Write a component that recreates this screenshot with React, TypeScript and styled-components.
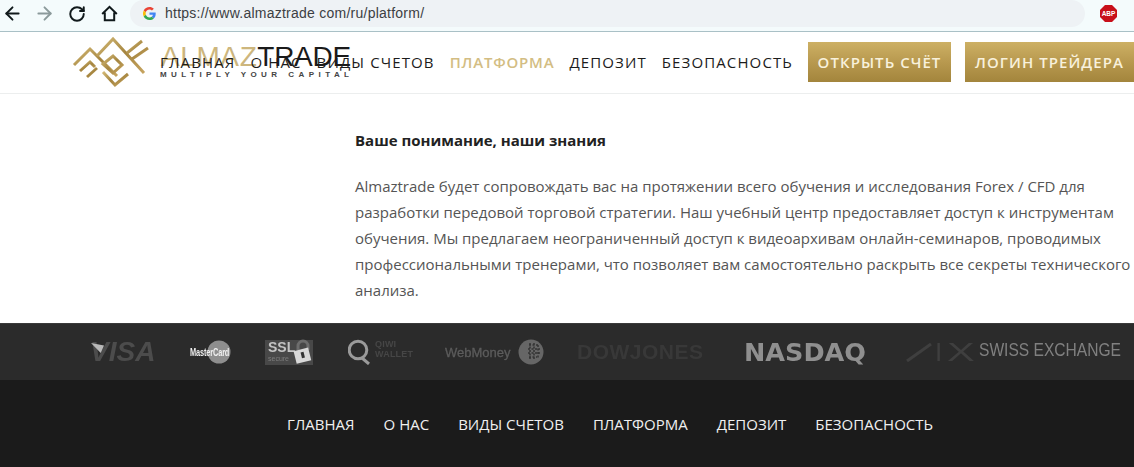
import React from 'react'
import styled, { createGlobalStyle } from 'styled-components'
import { ArrowLeft, ArrowRight, RotateCw } from 'lucide-react'

const Global = createGlobalStyle`
  html, body {
    margin: 0;
    padding: 0;
    background: #fff;
    overflow: hidden;
  }
  body {
    font-family: "Open Sans", "Liberation Sans", sans-serif;
  }
`

const Page = styled.div`
  width: 1134px;
  height: 467px;
  overflow: hidden;
  display: flex;
  flex-direction: column;
`

const Toolbar = styled.div`
  height: 27px;
  flex: none;
  display: flex;
  align-items: center;
  background: #f4fbfc;
  border-bottom: 1px solid #a9c0c6;
  padding: 0 0 4px 2px;
`

const NavIcon = styled.span<{ $gap: number; $muted?: boolean }>`
  display: flex;
  margin-right: ${(p) => p.$gap}px;
  color: ${(p) => (p.$muted ? '#8b9a9b' : '#10191b')};
`

const AddressBar = styled.div`
  width: 955px;
  height: 27px;
  border-radius: 14px;
  background: #eef2f5;
  display: flex;
  align-items: center;
  padding-left: 13px;
  gap: 9px;
  box-sizing: border-box;
`

const Url = styled.span`
  font-family: "Liberation Sans", Arial, sans-serif;
  font-size: 14px;
  color: #3c4043;
  letter-spacing: 0.245px;
  margin-top: -1px;
`

const AbpBadge = styled.svg`
  margin-left: 15px;
  flex: none;
`

const SiteHeader = styled.header`
  position: relative;
  height: 59px;
  flex: none;
  display: flex;
  align-items: center;
  padding: 0 0 2px 160px;
  background: #fff;
  border-bottom: 1px solid #eceeee;
`

const Logo = styled.div`
  position: absolute;
  left: 70px;
  top: 2px;
  display: flex;
  align-items: flex-start;
`

const LogoWords = styled.div`
  margin-top: 9px;
  display: flex;
  flex-direction: column;
`

const Wordmark = styled.div`
  font-family: "Liberation Sans", Arial, sans-serif;
  font-size: 28px;
  line-height: 27px;
  margin-left: 1px;
  letter-spacing: -0.3px;
  color: #1a1a1a;
  white-space: nowrap;

  span {
    color: #cdb67d;
    letter-spacing: 0.6px;
  }
`

const Tagline = styled.div`
  font-family: "Liberation Sans", Arial, sans-serif;
  font-size: 8px;
  font-weight: 700;
  line-height: 9px;
  letter-spacing: 4.45px;
  color: #444;
  white-space: nowrap;
`

const Menu = styled.nav`
  position: relative;
  display: flex;
  align-items: center;
  gap: 15px;
`

const MenuLink = styled.a<{ $active?: boolean }>`
  font-size: 15px;
  letter-spacing: ${(p) => (p.$active ? 0.8 : 1.12)}px;
  white-space: nowrap;
  color: ${(p) => (p.$active ? '#d3bd83' : '#1c1c1c')};
  font-weight: ${(p) => (p.$active ? 600 : 400)};
`

const GoldButton = styled.a<{ $width: number; $gap: number }>`
  flex: none;
  width: ${(p) => p.$width}px;
  margin-left: ${(p) => p.$gap}px;
  height: 40px;
  display: flex;
  align-items: center;
  justify-content: center;
  font-size: 15px;
  font-weight: 600;
  letter-spacing: 1.05px;
  white-space: nowrap;
  color: #f8f1dc;
  background: linear-gradient(180deg, #cdb064 0%, #b8994f 50%, #a3853c 100%);
`

const Content = styled.main`
  flex: 1;
  padding: 35px 0 0 355px;
  background: #fff;
`

const Heading = styled.h3`
  margin: 0 0 22px;
  font-size: 15px;
  line-height: 22px;
  font-weight: 700;
  color: #222;
`

const Paragraph = styled.p`
  margin: 0;
  width: 779px;
  font-size: 15px;
  line-height: 26px;
  color: #555;
`

const LogoBand = styled.div`
  height: 57px;
  flex: none;
  display: flex;
  align-items: center;
  padding-left: 90px;
  box-sizing: border-box;
  background: #2b2b2b;
  border-top: 1px solid #3a3a3a;
`

const Brand = styled.div<{ $width: number }>`
  width: ${(p) => p.$width}px;
  flex: none;
  display: flex;
  align-items: center;
  white-space: nowrap;
  filter: blur(0.5px);
`

const Visa = styled.span`
  position: relative;
  font-family: "Liberation Sans", Arial, sans-serif;
  font-size: 28px;
  font-weight: 700;
  font-style: italic;
  color: #4c4c4c;

  &::before {
    content: '';
    position: absolute;
    left: 1px;
    top: 7px;
    width: 13px;
    height: 10px;
    background: #b8b8b8;
    clip-path: polygon(0 0, 100% 25%, 75% 100%);
  }
`

const MasterLabel = styled.span`
  position: relative;
  display: inline-block;
  font-family: "Liberation Sans", Arial, sans-serif;
  font-size: 10px;
  font-weight: 700;
  letter-spacing: -0.2px;
  color: #f0f0f0;
  margin-right: -36px;
  transform: scaleX(0.74);
  transform-origin: left center;
`

const SslBox = styled.span`
  flex: none;
  display: flex;
  flex-direction: column;
  width: 48px;
  height: 25px;
  padding-left: 3px;
  box-sizing: border-box;
  background: #484848;
  font-family: "Liberation Sans", Arial, sans-serif;
`

const SslText = styled.span`
  font-size: 14px;
  font-weight: 700;
  line-height: 15px;
  color: #c4c4c4;
`

const SslSub = styled.span`
  font-size: 7px;
  line-height: 8px;
  color: #7c7c7c;
`

const QiwiText = styled.span`
  font-family: "Liberation Sans", Arial, sans-serif;
  font-size: 9px;
  font-weight: 700;
  line-height: 10px;
  margin: -6px 0 0 2px;
  color: #464646;
  letter-spacing: 0.2px;
`

const WebMoney = styled.span`
  font-family: "Liberation Sans", Arial, sans-serif;
  font-size: 13px;
  color: #5c5c5c;
  -webkit-text-stroke: 0.3px #5c5c5c;
  margin-right: 7px;
`

const DowJones = styled.span`
  font-family: "Liberation Sans", Arial, sans-serif;
  font-size: 21px;
  font-weight: 700;
  letter-spacing: 0.5px;
  color: #383838;
`

const Nasdaq = styled.span`
  font-family: "DejaVu Sans", sans-serif;
  font-size: 25.500px;
  font-weight: 700;
  color: #8f8f8f;
`

const SixMark = styled.span`
  font-family: "Liberation Sans", Arial, sans-serif;
  font-size: 26px;
  letter-spacing: 5px;
  color: #3f3f3f;
  width: 44px;
  flex: none;
`

const SixX = styled.span`
  display: inline-block;
  transform: scaleX(1.6);
  transform-origin: left center;
`

const SwissLabel = styled.span`
  display: inline-block;
  font-family: "Liberation Sans", Arial, sans-serif;
  font-size: 19px;
  color: #808080;
  margin: -5px -31px 0 0;
  transform: scaleX(0.82);
  transform-origin: left center;
`

const Footer = styled.footer`
  height: 87px;
  flex: none;
  box-sizing: border-box;
  background: #1b1b1b;
  display: flex;
  padding: 34px 0 0 287px;
  gap: 29px;
`

const FooterLink = styled.a`
  font-size: 15px;
  line-height: 20px;
  color: #f0f0f0;
  white-space: nowrap;
`

const GoogleG = () => (
  <svg width="13" height="13" viewBox="0 0 48 48">
    <path fill="#EA4335" d="M24 9.500c3.500 0 6.700 1.300 9.100 3.500l6.800-6.800C35.800 2.400 30.200 0 24 0 14.600 0 6.500 5.400 2.600 13.200l7.900 6.200C12.400 13.600 17.700 9.500 24 9.500z" />
    <path fill="#4285F4" d="M46.900 24.500c0-1.600-.1-3.100-.4-4.500H24v9h12.900c-.6 3-2.200 5.500-4.700 7.200l7.700 6c4.500-4.200 7-10.300 7-17.700z" />
    <path fill="#FBBC05" d="M10.500 28.600c-.5-1.400-.8-3-.8-4.600s.3-3.200.8-4.600l-7.900-6.200C.9 16.500 0 20.100 0 24s.9 7.500 2.600 10.800l7.900-6.200z" />
    <path fill="#34A853" d="M24 48c6.500 0 11.900-2.100 15.900-5.800l-7.700-6c-2.200 1.400-4.900 2.300-8.200 2.300-6.300 0-11.600-4.100-13.500-9.900l-7.900 6.200C6.500 42.600 14.600 48 24 48z" />
  </svg>
)

const HomeIcon = () => (
  <svg width="17" height="17" viewBox="0 0 17 17" fill="none" stroke="#10191b" strokeWidth="2">
    <path d="M1.200 9 8.500 1.800 15.800 9M3.800 7.500v7.700h9.400V7.500" />
  </svg>
)

const LogoMark = () => (
  <svg width="90" height="56" viewBox="0 0 90 56" fill="none" strokeWidth="3" stroke="url(#gold)">
    <defs>
      <linearGradient id="gold" x1="0" y1="0" x2="1" y2="1">
        <stop offset="0" stopColor="#d3b976" />
        <stop offset="0.5" stopColor="#a5853f" />
        <stop offset="1" stopColor="#c6a460" />
      </linearGradient>
    </defs>
    <path d="M4 31 20 15l27 27" />
    <path d="M10 37l10-9 5 5" />
    <path d="M17 43l10-9" />
    <path d="M27 22 43 5l31 34" />
    <path d="M43 22l9 9-9 8-10-9z" />
    <path d="M33 38l12 13 13-11" />
    <path d="M57 19 72 7M62 25 78 14" />
  </svg>
)

const MasterDisc = () => (
  <svg width="24" height="24" viewBox="0 0 24 24">
    <circle cx="12" cy="12" r="11.500" fill="#8e8e8e" />
  </svg>
)

const LockIcon = () => (
  <svg width="20" height="26" viewBox="0 0 20 26" style={{ marginLeft: -20, position: 'relative' }}>
    <path d="M5 11V7a5 5 0 0 1 10 0v4" fill="none" stroke="#6d6d6d" strokeWidth="3" />
    <rect x="2" y="10" width="15" height="13" fill="#d8d8d8" transform="rotate(-14 10 17)" />
    <rect x="8.500" y="13" width="3" height="6" fill="#333" transform="rotate(-14 10 17)" />
  </svg>
)

const QiwiIcon = () => (
  <svg width="25" height="26" viewBox="0 0 25 26" fill="none" stroke="#9a9a9a" strokeWidth="3" style={{ flex: 'none' }}>
    <circle cx="10" cy="11" r="8.800" />
    <path d="M14 19l7 6" />
  </svg>
)

const Globe = () => (
  <svg width="26" height="26" viewBox="0 0 26 26">
    <circle cx="13" cy="13" r="12.500" fill="#666" />
    <path d="M11 6h10M10 10h12M10 14h12M11 18h8M12 4v17M16 4v17M20 6v13" stroke="#333" strokeWidth="1.500" strokeDasharray="2 1.500" />
  </svg>
)

const SixSlash = () => (
  <svg width="30" height="22" viewBox="0 0 30 22" fill="none" stroke="#3f3f3f" strokeWidth="3" style={{ flex: 'none' }}>
    <path d="M2 20 26 3" />
  </svg>
)

const menu = ['ГЛАВНАЯ', 'О НАС', 'ВИДЫ СЧЕТОВ', 'ПЛАТФОРМА', 'ДЕПОЗИТ', 'БЕЗОПАСНОСТЬ']

export default function App() {
  return (
    <Page>
      <Global />
      <Toolbar>
        <NavIcon $gap={11}>
          <ArrowLeft size={21} strokeWidth={2.2} />
        </NavIcon>
        <NavIcon $gap={13} $muted>
          <ArrowRight size={21} strokeWidth={2.2} />
        </NavIcon>
        <NavIcon $gap={15}>
          <RotateCw size={18} strokeWidth={2.6} />
        </NavIcon>
        <NavIcon $gap={12}>
          <HomeIcon />
        </NavIcon>
        <AddressBar>
          <GoogleG />
          <Url>https://www.almaztrade com/ru/platform/</Url>
        </AddressBar>
        <AbpBadge width="17" height="17" viewBox="0 0 17 17">
          <path d="M5 0h7l5 5v7l-5 5H5l-5-5V5z" fill="#c8101a" />
          <text x="8.500" y="11" fontSize="6.500" fontWeight="700" fill="#fff" textAnchor="middle" fontFamily="Liberation Sans">
            ABP
          </text>
        </AbpBadge>
      </Toolbar>

      <SiteHeader>
        <Logo>
          <LogoMark />
          <LogoWords>
            <Wordmark>
              <span>ALMAZ</span>TRADE
            </Wordmark>
            <Tagline>MULTIPLY YOUR CAPITAL</Tagline>
          </LogoWords>
        </Logo>
        <Menu>
          {menu.map((item) => (
            <MenuLink key={item} $active={item === 'ПЛАТФОРМА'}>
              {item}
            </MenuLink>
          ))}
        </Menu>
        <GoldButton $width={143} $gap={15}>
          ОТКРЫТЬ СЧЁТ
        </GoldButton>
        <GoldButton $width={169} $gap={14}>
          ЛОГИН ТРЕЙДЕРА
        </GoldButton>
      </SiteHeader>

      <Content>
        <Heading>Ваше понимание, наши знания</Heading>
        <Paragraph>
          Almaztrade будет сопровождать вас на протяжении всего обучения и исследования Forex / CFD для разработки
          передовой торговой стратегии. Наш учебный центр предоставляет доступ к инструментам обучения. Мы предлагаем
          неограниченный доступ к видеоархивам онлайн-семинаров, проводимых профессиональными тренерами, что позволяет
          вам самостоятельно раскрыть все секреты технического анализа.
        </Paragraph>
      </Content>

      <LogoBand>
        <Brand $width={100}>
          <Visa>VISA</Visa>
        </Brand>
        <Brand $width={75}>
          <MasterLabel>MasterCard</MasterLabel>
          <MasterDisc />
        </Brand>
        <Brand $width={83}>
          <SslBox>
            <SslText>SSL</SslText>
            <SslSub>secure</SslSub>
          </SslBox>
          <LockIcon />
        </Brand>
        <Brand $width={97}>
          <QiwiIcon />
          <QiwiText>
            QIWI
            <br />
            WALLET
          </QiwiText>
        </Brand>
        <Brand $width={132}>
          <WebMoney>WebMoney</WebMoney>
          <Globe />
        </Brand>
        <Brand $width={167}>
          <DowJones>DOWJONES</DowJones>
        </Brand>
        <Brand $width={161}>
          <Nasdaq>NASDAQ</Nasdaq>
        </Brand>
        <Brand $width={229}>
          <SixSlash />
          <SixMark>
            I<SixX>X</SixX>
          </SixMark>
          <SwissLabel>SWISS EXCHANGE</SwissLabel>
        </Brand>
      </LogoBand>

      <Footer>
        {menu.map((item) => (
          <FooterLink key={item}>{item}</FooterLink>
        ))}
      </Footer>
    </Page>
  )
}
